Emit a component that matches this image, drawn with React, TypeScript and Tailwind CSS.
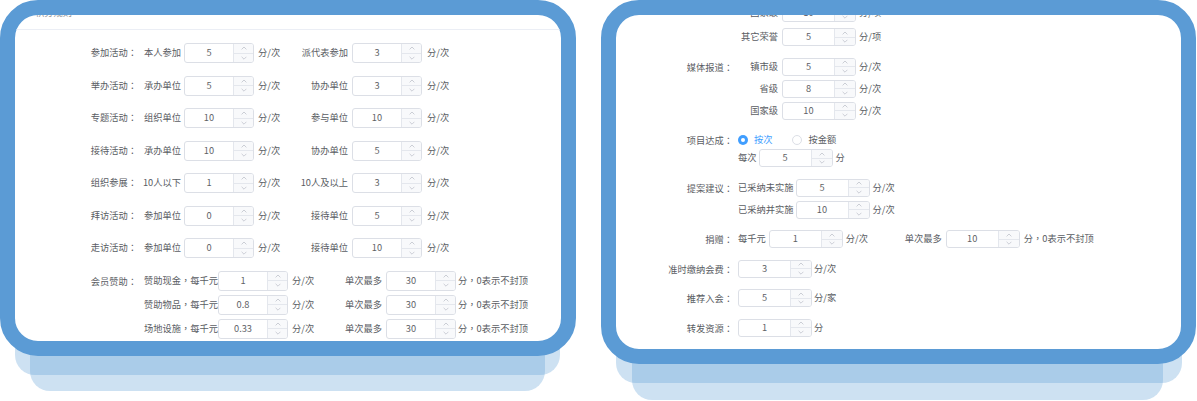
import React from 'react';

type Size = 'left' | 'right';

// centred full-width punctuation, as in the original UI font
const P = ({ c }: { c: string }) => (
  <span className="font-['Noto_Sans_CJK_TC','Noto_Sans_CJK_SC',sans-serif]">{c}</span>
);

const txt = (s: string) =>
  s.split(/([：，])/).map((part, i) => (part === '：' || part === '，' ? <P key={i} c={part} /> : part));

const Chevron = ({ up }: { up?: boolean }) => (
  <svg width="6" height="4" viewBox="0 0 6 4" fill="none">
    <polyline
      points={up ? '0.6,3.4 3,1 5.4,3.4' : '0.6,0.8 3,3.2 5.4,0.8'}
      stroke="#bfc3cb"
      strokeWidth="0.8"
    />
  </svg>
);

const NumInput = ({ value, size = 'left' }: { value: string; size?: Size }) => {
  const box = size === 'left' ? 'w-[70px] h-[20px]' : 'w-[74px] h-[18px]';
  const ctl = size === 'left' ? 'w-[20px]' : 'w-[21px]';
  return (
    <div className={`${box} shrink-0 flex rounded-[3px] border border-[#dcdfe6] bg-white overflow-hidden`}>
      <div className="flex-1 flex items-center justify-center text-[#606266]">{value}</div>
      <div className={`${ctl} flex flex-col border-l border-[#e4e7ed] bg-[#f8f9fb]`}>
        <div className="flex-1 flex items-center justify-center border-b border-[#e4e7ed]">
          <Chevron up />
        </div>
        <div className="flex-1 flex items-center justify-center">
          <Chevron />
        </div>
      </div>
    </div>
  );
};

const activities = [
  ['参加活动：', '本人参加', '5', '派代表参加', '3'],
  ['举办活动：', '承办单位', '5', '协办单位', '3'],
  ['专题活动：', '组织单位', '10', '参与单位', '10'],
  ['接待活动：', '承办单位', '10', '协办单位', '5'],
  ['组织参展：', '10人以下', '1', '10人及以上', '3'],
  ['拜访活动：', '参加单位', '0', '接待单位', '5'],
  ['走访活动：', '参加单位', '0', '接待单位', '10'],
];

const sponsors = [
  ['赞助现金，每千元', '1'],
  ['赞助物品，每千元', '0.8'],
  ['场地设施，每千元', '0.33'],
];

const LeftPanel = () => (
  <div className="flex flex-col">
    {/* title bar, mostly hidden under the frame */}
    <div className="h-[15px] shrink-0 border-b border-[#ebeef5] px-[20px]">
      <span className="block -translate-y-[9px] leading-[12px] text-[#909399]">积分规则</span>
    </div>

    <div className="mt-[13px] flex flex-col gap-[12.5px]">
      {activities.map(([label, s1, v1, s2, v2], i) => (
        <div key={i} className="flex items-center h-[20px]">
          <div className="w-[122px] shrink-0 text-right">{txt(label)}</div>
          <div className="w-[44px] shrink-0 text-right">{s1}</div>
          <div className="ml-[3px]">
            <NumInput value={v1} />
          </div>
          <div className="ml-[4px] w-[33px] shrink-0">分/次</div>
          <div className="w-[57px] shrink-0 text-right">{s2}</div>
          <div className="ml-[4px]">
            <NumInput value={v2} />
          </div>
          <div className="ml-[5px]">分/次</div>
        </div>
      ))}

      <div className="flex">
        <div className="w-[122px] shrink-0 text-right h-[20px] leading-[20px]">{txt('会员赞助：')}</div>
        <div className="flex flex-col gap-[4px]">
          {sponsors.map(([s, v], i) => (
            <div key={i} className="flex items-center h-[20px]">
              <div className="w-[81px] shrink-0 text-right">{txt(s)}</div>
              <NumInput value={v} />
              <div className="ml-[4px] w-[33px] shrink-0">分/次</div>
              <div className="w-[57px] shrink-0 text-right">单次最多</div>
              <div className="ml-[4px]">
                <NumInput value="30" />
              </div>
              <div className="ml-[2px]">{txt('分，0表示不封顶')}</div>
            </div>
          ))}
        </div>
      </div>
    </div>
  </div>
);

const Group = ({ label, gap, children }: { label?: string; gap?: string; children: React.ReactNode }) => (
  <div className="flex">
    <div className="w-[117px] shrink-0 text-right h-[18px] leading-[18px]">{label ? txt(label) : null}</div>
    <div className={`ml-[5px] flex flex-col ${gap ?? ''}`}>{children}</div>
  </div>
);

const LevelRow = ({ name, value, unit }: { name: string; value: string; unit: string }) => (
  <div className="flex items-center h-[18px]">
    <div className="w-[40px] shrink-0 text-right">{name}</div>
    <div className="ml-[4px]">
      <NumInput value={value} size="right" />
    </div>
    <div className="ml-[3px]">{unit}</div>
  </div>
);

const RightPanel = () => (
  <div className="-mt-[11px] flex flex-col gap-[11.5px]">
    <Group gap="gap-[6px]">
      <LevelRow name="国家级" value="10" unit="分/项" />
      <LevelRow name="其它荣誉" value="5" unit="分/项" />
    </Group>

    <Group label="媒体报道：" gap="gap-[4px]">
      <LevelRow name="镇市级" value="5" unit="分/次" />
      <LevelRow name="省级" value="8" unit="分/次" />
      <LevelRow name="国家级" value="10" unit="分/次" />
    </Group>

    <Group label="项目达成：">
      <div className="flex items-center h-[18px]">
        <span className="w-[10px] h-[10px] rounded-full bg-[#409eff] flex items-center justify-center">
          <span className="w-[4px] h-[4px] rounded-full bg-white" />
        </span>
        <span className="ml-[6px] text-[#409eff]">按次</span>
        <span className="ml-[19px] w-[10px] h-[10px] rounded-full border border-[#dcdfe6] bg-white" />
        <span className="ml-[7px]">按金额</span>
      </div>
      <div className="flex items-center h-[18px]">
        <span>每次</span>
        <div className="ml-[2px]">
          <NumInput value="5" size="right" />
        </div>
        <span className="ml-[3px]">分</span>
      </div>
    </Group>

    <Group label="提案建议：" gap="gap-[4px]">
      {[
        ['已采纳未实施', '5'],
        ['已采纳并实施', '10'],
      ].map(([n, v]) => (
        <div key={n} className="flex items-center h-[18px]">
          <span>{n}</span>
          <div className="ml-[2px]">
            <NumInput value={v} size="right" />
          </div>
          <span className="ml-[3px]">分/次</span>
        </div>
      ))}
    </Group>

    <Group label="捐赠：">
      <div className="flex items-center h-[18px]">
        <span>每千元</span>
        <div className="ml-[3px]">
          <NumInput value="1" size="right" />
        </div>
        <div className="ml-[3px] w-[33px] shrink-0">分/次</div>
        <div className="w-[63px] shrink-0 text-right">单次最多</div>
        <div className="ml-[4px]">
          <NumInput value="10" size="right" />
        </div>
        <span className="ml-[4px]">{txt('分，0表示不封顶')}</span>
      </div>
    </Group>

    {[
      ['准时缴纳会费：', '3', '分/次'],
      ['推荐入会：', '5', '分/家'],
      ['转发资源：', '1', '分'],
    ].map(([l, v, u]) => (
      <Group key={l} label={l}>
        <div className="flex items-center h-[18px]">
          <NumInput value={v} size="right" />
          <span className="ml-[2px]">{u}</span>
        </div>
      </Group>
    ))}
  </div>
);

export default function App() {
  return (
    <div className="w-[1197px] h-[401px] overflow-hidden bg-white flex items-start whitespace-nowrap text-[9.25px] leading-none text-[#5a5d63] font-['Noto_Sans_CJK_SC','Microsoft_YaHei',sans-serif]">
      {/* left card */}
      <div className="relative w-[576px] h-[356px] shrink-0">
        <div className="absolute left-[15px] right-[16px] top-[200px] -bottom-[19px] rounded-[20px] bg-[#5b9bd5]/30" />
        <div className="absolute left-[30px] right-[31px] top-[200px] -bottom-[35px] rounded-[20px] bg-[#5b9bd5]/30" />
        <div className="relative h-full rounded-[38px] border-[15px] border-[#5b9bd5] bg-white overflow-hidden">
          <LeftPanel />
        </div>
      </div>

      {/* right card */}
      <div className="relative ml-[25px] w-[595px] h-[364px] shrink-0">
        <div className="absolute left-[15px] right-[14px] top-[200px] -bottom-[19px] rounded-[20px] bg-[#5b9bd5]/30" />
        <div className="absolute left-[31px] right-[33px] top-[200px] -bottom-[36px] rounded-[20px] bg-[#5b9bd5]/30" />
        <div className="relative h-full rounded-[38px] border-[15px] border-[#5b9bd5] bg-white overflow-hidden">
          <RightPanel />
        </div>
      </div>
    </div>
  );
}
